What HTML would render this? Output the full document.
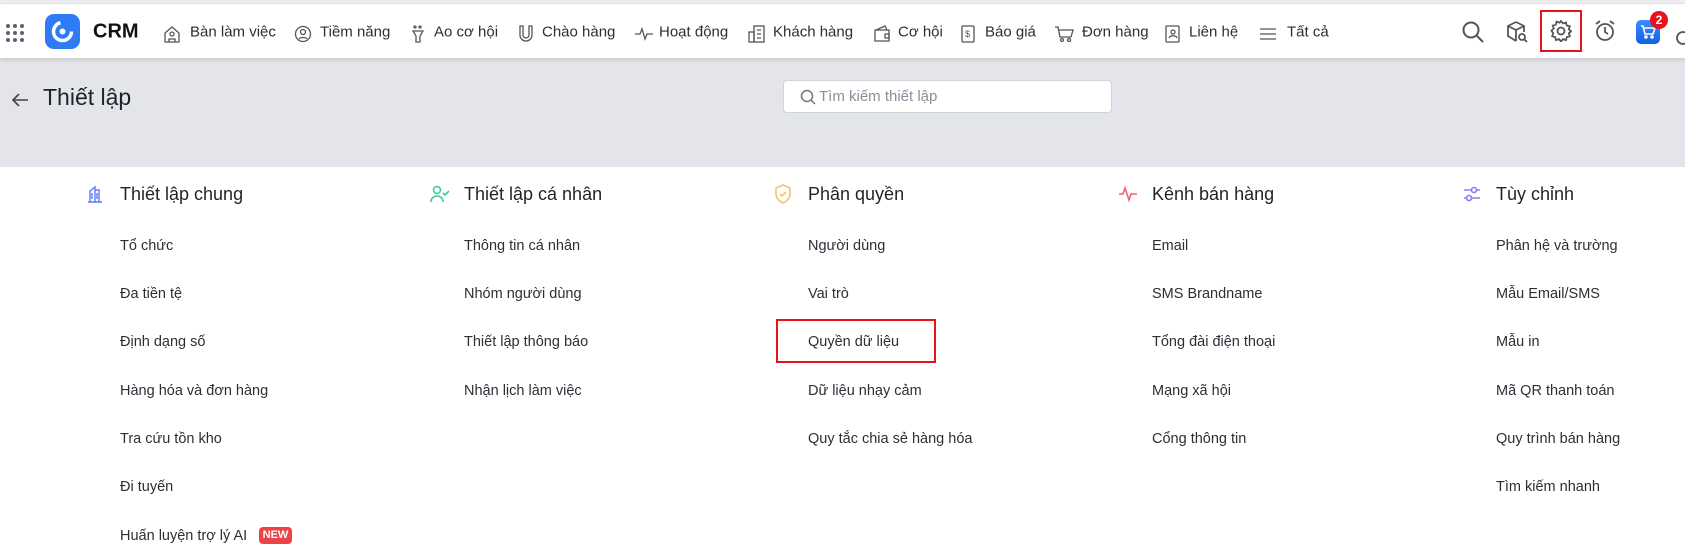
<!DOCTYPE html>
<html><head><meta charset="utf-8"><style>
*{margin:0;padding:0;box-sizing:border-box}
body{width:1685px;height:556px;overflow:hidden;background:#fff;font-family:"Liberation Sans",Arial,sans-serif;position:relative;color:#1f2329}
.a{position:absolute;white-space:nowrap}
.top{position:absolute;left:0;top:0;width:1685px;height:4px;background:#eceef1;border-bottom:1px solid #e2e4e8}
.nav{position:absolute;left:0;top:4px;width:1685px;height:54px;background:#fff;box-shadow:0 2px 4px rgba(0,0,0,.12);z-index:2}
.ni{position:absolute;top:28px;font-size:15px;color:#2b2f36;transform:translateY(-50%)}
.ic{position:absolute;top:21px}
.hdr{position:absolute;left:0;top:58px;width:1685px;height:109px;background:#e3e5ea}
.h{font-size:18px;color:#1f2329;top:184px}
.it{font-size:14.5px;color:#2b2f36}
</style></head><body>
<div class="top"></div>
<div class="nav">
<svg class="a" style="left:4px;top:18px" width="22" height="22"><g fill="#5c6370"><circle cx="4" cy="4" r="2"/><circle cx="11" cy="4" r="2"/><circle cx="18" cy="4" r="2"/><circle cx="4" cy="11" r="2"/><circle cx="11" cy="11" r="2"/><circle cx="18" cy="11" r="2"/><circle cx="4" cy="18" r="2"/><circle cx="11" cy="18" r="2"/><circle cx="18" cy="18" r="2"/></g></svg>
<svg class="a" style="left:45px;top:10px" width="35" height="35"><rect width="35" height="35" rx="9" fill="#2f7bf6"/><circle cx="17.5" cy="17.5" r="9" fill="none" stroke="#fff" stroke-width="3.5" stroke-dasharray="40 17"/><circle cx="17.5" cy="17.5" r="3" fill="#fff"/></svg>
<div class="a ni" style="left:93px;font-size:20px;font-weight:bold;color:#111">CRM</div>
<svg class="a ic" style="left:163px" width="18" height="18" fill="none" stroke="#555" stroke-width="1.3"><path d="M2 8L9 2l7 6v9H2z"/><circle cx="9" cy="9" r="2"/><path d="M6 17v-3h6v3"/></svg>
<div class="a ni" style="left:190px">Bàn làm việc</div>
<svg class="a ic" style="left:294px" width="18" height="18" fill="none" stroke="#555" stroke-width="1.3"><circle cx="9" cy="9" r="7.5"/><circle cx="9" cy="7" r="2.5"/><path d="M5 14c1-2 7-2 8 0"/></svg>
<div class="a ni" style="left:320px">Tiềm năng</div>
<svg class="a ic" style="left:410px" width="16" height="18" fill="none" stroke="#555" stroke-width="1.3"><path d="M3 6h10l-3 5v6H6v-6z"/><circle cx="5" cy="2" r="1"/><circle cx="10" cy="2" r="1"/></svg>
<div class="a ni" style="left:434px">Ao cơ hội</div>
<svg class="a ic" style="left:518px" width="16" height="18" fill="none" stroke="#555" stroke-width="1.3"><path d="M2 1v9a6 6 0 0012 0V1h-3v9a3 3 0 01-6 0V1z"/></svg>
<div class="a ni" style="left:542px">Chào hàng</div>
<svg class="a ic" style="left:634px" width="20" height="18" fill="none" stroke="#555" stroke-width="1.3"><path d="M1 9h5l2-5 3 10 2-5h6"/></svg>
<div class="a ni" style="left:659px">Hoạt động</div>
<svg class="a ic" style="left:748px" width="18" height="18" fill="none" stroke="#555" stroke-width="1.3"><rect x="6" y="1" width="10" height="16"/><rect x="1" y="7" width="5" height="10"/><path d="M9 5h4M9 9h4M9 13h4"/></svg>
<div class="a ni" style="left:773px">Khách hàng</div>
<svg class="a ic" style="left:873px" width="18" height="18" fill="none" stroke="#555" stroke-width="1.3"><path d="M2 5h14v11H2zM3 5l9-4 2 4"/><path d="M12 9h4v4h-4z"/></svg>
<div class="a ni" style="left:898px">Cơ hội</div>
<svg class="a ic" style="left:960px" width="16" height="18" fill="none" stroke="#555" stroke-width="1.3"><rect x="2" y="1" width="12" height="16" rx="1"/><text x="5" y="12" font-size="9" fill="#555" stroke="none">$</text></svg>
<div class="a ni" style="left:985px">Báo giá</div>
<svg class="a ic" style="left:1054px" width="20" height="18" fill="none" stroke="#555" stroke-width="1.3"><path d="M1 2h3l2 10h11l2-7H5"/><circle cx="8" cy="15" r="1.5"/><circle cx="15" cy="15" r="1.5"/></svg>
<div class="a ni" style="left:1082px">Đơn hàng</div>
<svg class="a ic" style="left:1164px" width="16" height="18" fill="none" stroke="#555" stroke-width="1.3"><rect x="2" y="1" width="13" height="16" rx="1"/><circle cx="9" cy="7" r="2"/><path d="M5 13c1-3 7-3 8 0"/></svg>
<div class="a ni" style="left:1189px">Liên hệ</div>
<svg class="a ic" style="left:1259px" width="18" height="18" fill="none" stroke="#555" stroke-width="1.3"><path d="M1 4h16M1 9h16M1 14h16"/></svg>
<div class="a ni" style="left:1287px">Tất cả</div>
<svg class="a" style="left:1461px;top:16px" width="24" height="24" fill="none" stroke="#555" stroke-width="2"><circle cx="10" cy="10" r="7.5"/><path d="M15.5 15.5L22 22"/></svg>
<svg class="a" style="left:1505px;top:16px" width="24" height="24" fill="none" stroke="#555" stroke-width="1.8"><path d="M11 2l8 4v6M11 2L3 6v10l8 5M3 6l8 4 8-4M11 10v11"/><circle cx="17" cy="17" r="3"/><path d="M19 19l3 3"/></svg>
<div class="a" style="left:1540px;top:6px;width:42px;height:42px;border:2px solid #e8141b"></div>
<svg class="a" style="left:1550px;top:16px" width="22" height="22" fill="none" stroke="#555" stroke-width="1.8"><path d="M11 1.5l2 2.5 3-1 .8 3 3 .8-1 3 2.3 2-2.3 2 1 3-3 .8-.8 3-3-1-2 2.5-2-2.5-3 1-.8-3-3-.8 1-3L1.5 11l2.3-2-1-3 3-.8.8-3 3 1z" transform="translate(0 -.5)"/><circle cx="11" cy="11" r="3.5"/></svg>
<svg class="a" style="left:1593px;top:15px" width="24" height="24" fill="none" stroke="#555" stroke-width="1.8"><circle cx="12" cy="13" r="8"/><path d="M12 8v5l3 2M3 5l4-3M21 5l-4-3"/></svg>
<div class="a" style="left:1636px;top:16px;width:24px;height:24px;border-radius:5px;background:linear-gradient(#3d8bff,#1062e0)"></div>
<svg class="a" style="left:1640px;top:21px" width="16" height="14" fill="none" stroke="#fff" stroke-width="1.6"><path d="M1 1h2l2 8h8l2-6H4"/><circle cx="6" cy="12" r="1"/><circle cx="12" cy="12" r="1"/></svg>
<div class="a" style="left:1650px;top:7px;width:18px;height:18px;border-radius:50%;background:#e8141b;color:#fff;font-size:12px;font-weight:bold;text-align:center;line-height:18px">2</div>
<svg class="a" style="left:1674px;top:22px" width="14" height="20" fill="none" stroke="#555" stroke-width="1.8"><circle cx="9" cy="12" r="6"/></svg>
</div>
<div class="hdr">
<svg class="a" style="left:10px;top:32px" width="20" height="20" fill="none" stroke="#444" stroke-width="1.6"><path d="M18 10H3M9 4l-6 6 6 6"/></svg>
<div class="a" style="left:43px;top:26px;font-size:23px;color:#1f2329">Thiết lập</div>
<div class="a" style="left:783px;top:22px;width:329px;height:33px;background:#fff;border:1px solid #d0d3d9;border-radius:4px"></div>
<svg class="a" style="left:800px;top:31px" width="16" height="16" fill="none" stroke="#777" stroke-width="1.5"><circle cx="7" cy="7" r="5.5"/><path d="M11 11l4 4"/></svg>
<div class="a" style="left:819px;top:30px;font-size:15px;color:#8a8f99">Tìm kiếm thiết lập</div>
</div>
<svg class="a" style="left:86px;top:185px" width="18" height="18" fill="none" stroke="#5b7cf0" stroke-width="1.4"><path d="M2 17h14M4 17V6l5-4v15M9 5h4v12M6 8v6M11 8v6"/></svg>
<div class="a h" style="left:120px">Thiết lập chung</div>
<svg class="a" style="left:430px;top:184px" width="20" height="20" fill="none" stroke="#3fc9a0" stroke-width="1.6"><circle cx="7" cy="6" r="3.5"/><path d="M1 18c0-4 3-6 6-6s6 2 6 6M13 9l2 2 4-4"/></svg>
<div class="a h" style="left:464px">Thiết lập cá nhân</div>
<svg class="a" style="left:774px;top:184px" width="18" height="20" fill="none" stroke="#f2c46a" stroke-width="1.6"><path d="M9 1l7 3v6c0 4-3 7-7 9-4-2-7-5-7-9V4z"/><path d="M6 10l2 2 4-4"/></svg>
<div class="a h" style="left:808px">Phân quyền</div>
<svg class="a" style="left:1118px;top:185px" width="20" height="18" fill="none" stroke="#f0626a" stroke-width="1.6"><path d="M1 9h4l2-6 4 12 2-6h6"/></svg>
<div class="a h" style="left:1152px">Kênh bán hàng</div>
<svg class="a" style="left:1462px;top:184px" width="20" height="20" fill="none" stroke="#8f7cf0" stroke-width="1.6"><path d="M2 6h16M2 14h16"/><circle cx="12" cy="6" r="2.5" fill="#fff"/><circle cx="7" cy="14" r="2.5" fill="#fff"/></svg>
<div class="a h" style="left:1496px">Tùy chỉnh</div>
<div class="a it" style="left:120px;top:238px">Tổ chức</div>
<div class="a it" style="left:120px;top:286px">Đa tiền tệ</div>
<div class="a it" style="left:120px;top:334px">Định dạng số</div>
<div class="a it" style="left:120px;top:383px">Hàng hóa và đơn hàng</div>
<div class="a it" style="left:120px;top:431px">Tra cứu tồn kho</div>
<div class="a it" style="left:120px;top:479px">Đi tuyến</div>
<div class="a it" style="left:120px;top:528px">Huấn luyện trợ lý AI</div>
<div class="a" style="left:259px;top:527px;width:33px;height:17px;border-radius:4px;background:#e8444a;color:#fff;font-size:11px;font-weight:bold;text-align:center;line-height:17px">NEW</div>
<div class="a it" style="left:464px;top:238px">Thông tin cá nhân</div>
<div class="a it" style="left:464px;top:286px">Nhóm người dùng</div>
<div class="a it" style="left:464px;top:334px">Thiết lập thông báo</div>
<div class="a it" style="left:464px;top:383px">Nhận lịch làm việc</div>
<div class="a it" style="left:808px;top:238px">Người dùng</div>
<div class="a it" style="left:808px;top:286px">Vai trò</div>
<div class="a it" style="left:808px;top:334px">Quyền dữ liệu</div>
<div class="a" style="left:776px;top:319px;width:160px;height:44px;border:2px solid #e8141b"></div>
<div class="a it" style="left:808px;top:383px">Dữ liệu nhạy cảm</div>
<div class="a it" style="left:808px;top:431px">Quy tắc chia sẻ hàng hóa</div>
<div class="a it" style="left:1152px;top:238px">Email</div>
<div class="a it" style="left:1152px;top:286px">SMS Brandname</div>
<div class="a it" style="left:1152px;top:334px">Tổng đài điện thoại</div>
<div class="a it" style="left:1152px;top:383px">Mạng xã hội</div>
<div class="a it" style="left:1152px;top:431px">Cổng thông tin</div>
<div class="a it" style="left:1496px;top:238px">Phân hệ và trường</div>
<div class="a it" style="left:1496px;top:286px">Mẫu Email/SMS</div>
<div class="a it" style="left:1496px;top:334px">Mẫu in</div>
<div class="a it" style="left:1496px;top:383px">Mã QR thanh toán</div>
<div class="a it" style="left:1496px;top:431px">Quy trình bán hàng</div>
<div class="a it" style="left:1496px;top:479px">Tìm kiếm nhanh</div>
</body></html>
